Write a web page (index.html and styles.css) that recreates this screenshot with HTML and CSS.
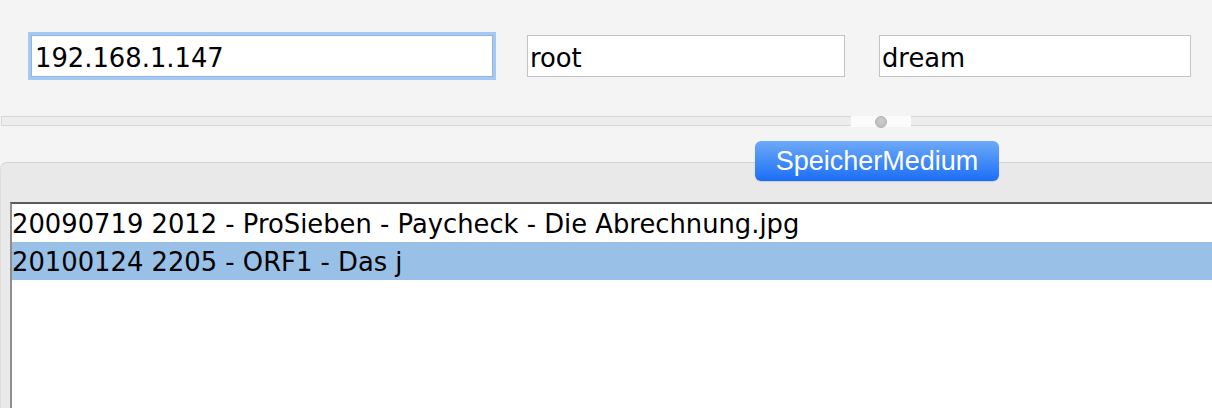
FILE: index.html
```html
<!DOCTYPE html>
<html lang="de">
<head>
  <meta charset="UTF-8">
  <title>Aufnahmen</title>
  <meta name="viewport" content="width=device-width, initial-scale=1.0">
  <link rel="stylesheet" href="styles.css">
</head>
<body>
  <!-- Login fields -->
  <div class="login">
    <input class="field field-host focused" value="192.168.1.147">
    <input class="field field-user" value="root">
    <input class="field field-pass" value="dream">
  </div>

  <!-- Split pane divider -->
  <div class="divider">
    <div class="knob"><span class="dot"></span></div>
  </div>

  <!-- Tabbed pane -->
  <div class="tabs">
    <button class="tab">SpeicherMedium</button>
  </div>
  <div class="tab-panel">
    <ul class="file-list">
      <li>20090719 2012 - ProSieben - Paycheck - Die Abrechnung.jpg</li>
      <li class="selected">20100124 2205 - ORF1 - Das j</li>
    </ul>
  </div>
</body>
</html>
```

FILE: styles.css
```css
html, body { margin: 0; height: 100%; }
body {
  background: #f4f4f4; font-family: "DejaVu Sans", sans-serif;
  overflow: hidden; width: 1212px;
  display: flex; flex-direction: column;
}

.login { display: flex; gap: 34px; padding: 35px 0 0 31px; height: 116px; box-sizing: border-box; flex: none; }
.field {
  box-sizing: border-box; height: 42px; margin: 0;
  border: 1px solid #c3c3c3; background: #fff; outline: none;
  font-family: "DejaVu Sans", sans-serif; font-size: 25.8px; color: #000;
  padding: 4px 3px 0 3px;
}
.field-host { width: 462px; }
.field-user { width: 318px; padding-left: 2px; }
.field-pass { width: 312px; padding-left: 2px; }
.focused { border-color: #8db5ea; box-shadow: 0 0 0 3px #a5c9f1; }

.divider {
  flex: none; height: 10px; box-sizing: border-box; margin-left: 1px;
  border: 1px solid #d7d7d7; border-right: none; background: #ededed;
  display: flex; padding-left: 849px;
}
.knob { width: 60px; height: 11px; margin-top: -1px; background: #fbfbfb; display: flex; justify-content: center; align-items: center; }
.dot {
  flex: none; width: 12px; height: 12px; border-radius: 50%;
  background: radial-gradient(circle at 50% 40%, #cdcdcd, #b9b9b9);
  border: 1px solid #b2b2b2; box-sizing: border-box;
}

.tabs { flex: none; display: flex; padding: 15px 0 0 755px; position: relative; z-index: 1; }
.tab {
  width: 244px; height: 40px; border: none; border-radius: 6px;
  background: linear-gradient(#6eaaf8, #1a6ef6);
  color: #fff; font-family: "Liberation Sans", Arial, sans-serif; font-size: 27px;
  padding: 0; box-shadow: 0 1px 1px rgba(0, 0, 0, 0.12);
}

.tab-panel {
  flex: 1; min-height: 0; margin-top: -19px;
  display: flex; flex-direction: column;
  background: #e9e9e9; border-top: 1px solid #d4d4d4; border-left: 1px solid #dedede;
  border-top-left-radius: 7px;
  padding: 39px 0 0 9px;
}
.file-list {
  flex: 1; list-style: none; margin: 0; padding: 0;
  background: #fff; border-top: 2px solid #5a5a5a; border-left: 2px solid #8e8e8e;
}
.file-list li { height: 36px; line-height: 36px; padding-top: 2px; font-size: 25.8px; white-space: nowrap; }
.file-list li.selected { background: #99c1e7; }
```
